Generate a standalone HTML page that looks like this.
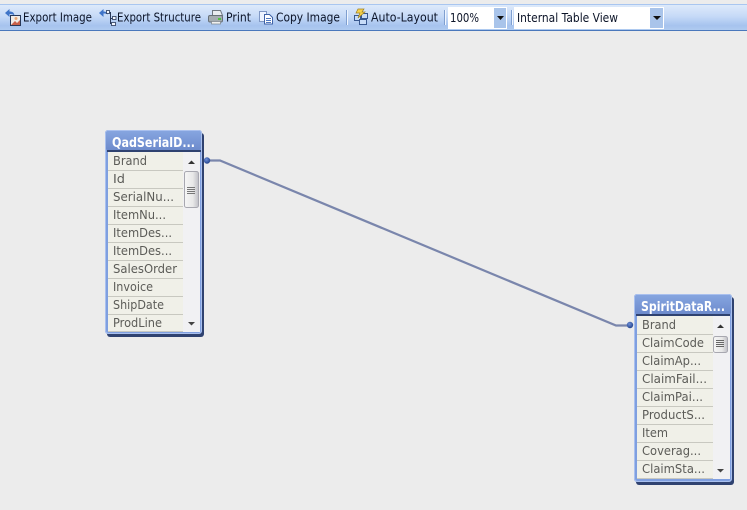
<!DOCTYPE html>
<html><head><meta charset="utf-8"><style>
html,body{margin:0;padding:0;background:#ececec;width:747px;height:510px;overflow:hidden}
svg{display:block}
text{font-family:"DejaVu Sans","Liberation Sans",sans-serif}
.tb{font-size:12.5px;fill:#0c1428}
.cell{font-size:12.5px;fill:#5c5c58}
.title{font-size:13.5px;font-weight:bold;fill:#fff}
</style></head><body>
<svg width="747" height="510" viewBox="0 0 747 510" xmlns="http://www.w3.org/2000/svg">
<defs>
<linearGradient id="tbg" x1="0" y1="0" x2="0" y2="1"><stop offset="0" stop-color="#dfebfb"/><stop offset=".45" stop-color="#c6daf7"/><stop offset=".8" stop-color="#a6c3ee"/><stop offset="1" stop-color="#b2ccf0"/></linearGradient>
<linearGradient id="ttl" x1="0" y1="0" x2="0" y2="1"><stop offset="0" stop-color="#86a5e0"/><stop offset="1" stop-color="#6d8bcc"/></linearGradient>
<linearGradient id="thumb" x1="0" y1="0" x2="1" y2="0"><stop offset="0" stop-color="#f6f6f6"/><stop offset=".6" stop-color="#e8e8e8"/><stop offset="1" stop-color="#bfbfc6"/></linearGradient>
<radialGradient id="dot" cx=".4" cy=".35" r=".7"><stop offset="0" stop-color="#6f90d8"/><stop offset="1" stop-color="#1e3f88"/></radialGradient>
</defs>
<rect width="747" height="510" fill="#ececec"/>
<!-- toolbar -->
<rect x="0" y="4" width="747" height="27" fill="url(#tbg)"/>
<rect x="0" y="4" width="747" height="1" fill="#a9c6f0"/>
<rect x="0" y="30" width="747" height="1" fill="#4a78bc"/>
<!-- export image icon -->
<rect x="10.500" y="15.500" width="10" height="10" fill="#f0ece8" stroke="#283858"/>
<path d="M11 25l4-4 2 2 3-3v5z" fill="#c8604a"/>
<circle cx="16" cy="18.500" r="1.500" fill="#e9a878"/>
<path d="M5 13l4.500-4v2.500c3 0 4.500 1 5 4-1.500-1.200-3-1.500-5-1.500v3z" fill="#3f74c8"/>
<text class="tb" x="23" y="21.500" textLength="69" lengthAdjust="spacingAndGlyphs">Export Image</text>
<!-- export structure icon -->
<path d="M99 13l4.500-4v2.500c2 0 4 1 4.500 3-2-1-3-1-4.500-1v3.500z" fill="#3f74c8"/>
<path d="M107 12.500h3.500v11h2M110.500 18.500h2" stroke="#283858" fill="none"/>
<rect x="106.500" y="10.500" width="3" height="3" fill="#f4f8ff" stroke="#283858" stroke-width=".8"/>
<rect x="112.500" y="16.500" width="3.500" height="3" fill="#f4f8ff" stroke="#283858" stroke-width=".8"/>
<rect x="111.500" y="22.500" width="4" height="3" fill="#f4f8ff" stroke="#283858" stroke-width=".8"/>
<text class="tb" x="117" y="21.500" textLength="84" lengthAdjust="spacingAndGlyphs">Export Structure</text>
<!-- print icon -->
<path d="M212.500 10.500h8l2 5h-10z" fill="#e8ecf0" stroke="#6f7780"/>
<rect x="208.500" y="15.500" width="14" height="6.500" rx="1.500" fill="#a4acb0" stroke="#687078"/>
<rect x="211.500" y="21.500" width="9" height="2.500" fill="#f0f0f0" stroke="#7a8288" stroke-width=".7"/>
<rect x="218" y="18" width="3" height="2" fill="#50c040"/>
<text class="tb" x="226" y="21.500" textLength="25" lengthAdjust="spacingAndGlyphs">Print</text>
<!-- copy image icon -->
<rect x="259.500" y="11.500" width="7" height="10" fill="#eef4ff" stroke="#7f97c4"/>
<path d="M264.500 14.500h5l3 3v6.500h-8z" fill="#fff" stroke="#3f63a8"/>
<path d="M266 18.500h5M266 20.500h5M266 22.500h5" stroke="#5078c0"/>
<text class="tb" x="276" y="21.500" textLength="64" lengthAdjust="spacingAndGlyphs">Copy Image</text>
<rect x="346" y="10" width="1" height="15" fill="#7f9fd0"/><rect x="347" y="10" width="1" height="15" fill="#f0f6ff"/>
<!-- auto layout icon -->
<rect x="354.500" y="15.500" width="6" height="5" fill="#c8dcf8" stroke="#38588f"/>
<rect x="361.500" y="13.500" width="6" height="5" fill="#c8dcf8" stroke="#38588f"/>
<rect x="359.500" y="19.500" width="7" height="5" fill="#c8dcf8" stroke="#38588f"/>
<path d="M358 9h6l-2 3h3l-7 6 2-5h-4z" fill="#f6d24c" stroke="#a08020" stroke-width=".7"/>
<text class="tb" x="371" y="21.500" textLength="67" lengthAdjust="spacingAndGlyphs">Auto-Layout</text>
<rect x="444" y="10" width="1" height="15" fill="#7f9fd0"/><rect x="445" y="10" width="1" height="15" fill="#f0f6ff"/>
<!-- combo 100% -->
<rect x="448" y="7" width="59" height="22" fill="#fff"/>
<rect x="494" y="8" width="12" height="20" fill="#a9c4ea"/>
<path d="M497 16h7l-3.500 4z" fill="#111"/>
<text x="450" y="22" class="tb" textLength="29" lengthAdjust="spacingAndGlyphs">100%</text>
<rect x="511" y="10" width="1" height="15" fill="#7f9fd0"/><rect x="512" y="10" width="1" height="15" fill="#f0f6ff"/>
<!-- combo view -->
<rect x="514" y="7" width="150" height="22" fill="#fff"/>
<rect x="650" y="8" width="13" height="20" fill="#a9c4ea"/>
<path d="M653 16h8l-4 4z" fill="#111"/>
<text x="517" y="22" class="tb" textLength="101" lengthAdjust="spacingAndGlyphs">Internal Table View</text>

<!-- connector -->
<path d="M207 160.500H220L616 325.500H630" fill="none" stroke="#7a86ac" stroke-width="2.200"/>
<circle cx="207" cy="160.500" r="3.200" fill="url(#dot)"/>
<circle cx="630" cy="325" r="3.200" fill="url(#dot)"/>

<!-- table 1 -->
<rect x="107" y="133" width="97" height="204" rx="3" fill="#2f4270"/>
<rect x="105" y="130" width="97" height="204" rx="3" fill="#7f9fe0"/>
<rect x="105.500" y="130.500" width="96" height="203" rx="3" fill="none" stroke="#a9c0ee"/>
<rect x="106" y="131" width="95" height="19" rx="2" fill="url(#ttl)"/>
<text class="title" x="112" y="147" textLength="83" lengthAdjust="spacingAndGlyphs">QadSerialD...</text>
<rect x="107" y="150" width="94" height="2" fill="#2f4270"/>
<rect x="108" y="152" width="92" height="180" fill="#f1f1f3"/>
<rect x="108" y="152" width="75" height="180" fill="#f0f0e8"/>
<g fill="#c8c8c0">
<rect x="108" y="170" width="75" height="1"/><rect x="108" y="188" width="75" height="1"/><rect x="108" y="206" width="75" height="1"/><rect x="108" y="224" width="75" height="1"/><rect x="108" y="242" width="75" height="1"/><rect x="108" y="260" width="75" height="1"/><rect x="108" y="278" width="75" height="1"/><rect x="108" y="296" width="75" height="1"/><rect x="108" y="314" width="75" height="1"/><rect x="108" y="331" width="75" height="1"/>
</g>
<text class="cell" x="113" y="165" textLength="34" lengthAdjust="spacingAndGlyphs">Brand</text>
<text class="cell" x="113" y="183" textLength="12" lengthAdjust="spacingAndGlyphs">Id</text>
<text class="cell" x="113" y="201" textLength="61" lengthAdjust="spacingAndGlyphs">SerialNu...</text>
<text class="cell" x="113" y="219" textLength="53" lengthAdjust="spacingAndGlyphs">ItemNu...</text>
<text class="cell" x="113" y="237" textLength="59" lengthAdjust="spacingAndGlyphs">ItemDes...</text>
<text class="cell" x="113" y="255" textLength="59" lengthAdjust="spacingAndGlyphs">ItemDes...</text>
<text class="cell" x="113" y="273" textLength="64" lengthAdjust="spacingAndGlyphs">SalesOrder</text>
<text class="cell" x="113" y="291" textLength="40" lengthAdjust="spacingAndGlyphs">Invoice</text>
<text class="cell" x="113" y="309" textLength="51" lengthAdjust="spacingAndGlyphs">ShipDate</text>
<text class="cell" x="113" y="327" textLength="49" lengthAdjust="spacingAndGlyphs">ProdLine</text>
<path d="M188 164h7l-3.500-3.500z" fill="#333"/>
<rect x="184.500" y="171.500" width="14" height="36" rx="2" fill="url(#thumb)" stroke="#a8a8b0"/>
<path d="M187 187.500h8M187 189.500h8M187 191.500h8M187 193.500h8" stroke="#777"/>
<path d="M188 322h7l-3.500 3.500z" fill="#444"/>

<!-- table 2 -->
<rect x="636" y="297" width="98" height="188" rx="3" fill="#2f4270"/>
<rect x="634" y="294" width="98" height="188" rx="3" fill="#7f9fe0"/>
<rect x="634.500" y="294.500" width="97" height="187" rx="3" fill="none" stroke="#a9c0ee"/>
<rect x="635" y="295" width="96" height="19" rx="2" fill="url(#ttl)"/>
<text class="title" x="641" y="311" textLength="84" lengthAdjust="spacingAndGlyphs">SpiritDataR...</text>
<rect x="636" y="314" width="94" height="2" fill="#2f4270"/>
<rect x="637" y="316" width="93" height="163" fill="#f1f1f3"/>
<rect x="637" y="316" width="76" height="163" fill="#f0f0e8"/>
<g fill="#c8c8c0">
<rect x="637" y="334" width="76" height="1"/><rect x="637" y="352" width="76" height="1"/><rect x="637" y="370" width="76" height="1"/><rect x="637" y="388" width="76" height="1"/><rect x="637" y="406" width="76" height="1"/><rect x="637" y="424" width="76" height="1"/><rect x="637" y="442" width="76" height="1"/><rect x="637" y="460" width="76" height="1"/><rect x="637" y="478" width="76" height="1"/>
</g>
<text class="cell" x="642" y="329" textLength="34" lengthAdjust="spacingAndGlyphs">Brand</text>
<text class="cell" x="642" y="347" textLength="62" lengthAdjust="spacingAndGlyphs">ClaimCode</text>
<text class="cell" x="642" y="365" textLength="59" lengthAdjust="spacingAndGlyphs">ClaimAp...</text>
<text class="cell" x="642" y="383" textLength="65" lengthAdjust="spacingAndGlyphs">ClaimFail...</text>
<text class="cell" x="642" y="401" textLength="61" lengthAdjust="spacingAndGlyphs">ClaimPai...</text>
<text class="cell" x="642" y="419" textLength="63" lengthAdjust="spacingAndGlyphs">ProductS...</text>
<text class="cell" x="642" y="437" textLength="26" lengthAdjust="spacingAndGlyphs">Item</text>
<text class="cell" x="642" y="455" textLength="59" lengthAdjust="spacingAndGlyphs">Coverag...</text>
<text class="cell" x="642" y="473" textLength="63" lengthAdjust="spacingAndGlyphs">ClaimSta...</text>
<path d="M717 328h7l-3.500-3.500z" fill="#333"/>
<rect x="713.500" y="336.500" width="14" height="16" rx="2" fill="url(#thumb)" stroke="#a8a8b0"/>
<path d="M716 340.500h8M716 342.500h8M716 344.500h8M716 346.500h8" stroke="#666"/>
<path d="M717 469h7l-3.500 3.500z" fill="#444"/>
</svg>
</body></html>
